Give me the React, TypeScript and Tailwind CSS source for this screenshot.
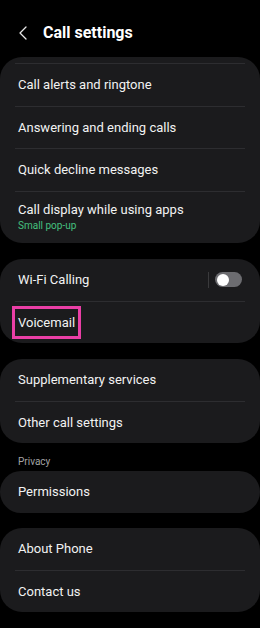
import { ChevronLeft } from 'lucide-react';

type Row = { label: string; sub?: string; toggle?: boolean; highlight?: boolean };

function Divider() {
  return <div className="mx-[15px] h-px bg-[#2d2d30]" />;
}

function Card({ rows, topDivider = false }: { rows: Row[]; topDivider?: boolean }) {
  return (
    <div className="rounded-[22px] bg-[#1b1b1d]">
      {topDivider && (
        <>
          <div className="h-[6px]" />
          <Divider />
        </>
      )}
      {rows.map((row, i) => (
        <div key={row.label}>
          {i > 0 && <Divider />}
          {row.sub ? (
            <div className="flex h-[51.5px] flex-col justify-center pl-[18px] pb-[2px]">
              <span className="text-[13px] leading-[18px] text-[#f2f2f2]">{row.label}</span>
              <span className="text-[10px] leading-[13px] text-[#45c07f]">{row.sub}</span>
            </div>
          ) : (
            <div className="flex h-[41.5px] items-center pl-[18px] pr-[18px]">
              {row.highlight ? (
                <span className="-ml-[6px] flex h-[33px] items-center border-[3px] border-[#ea3fa6] px-[3px] text-[13px] text-[#f2f2f2]">
                  {row.label}
                </span>
              ) : (
                <span className="text-[13px] text-[#f2f2f2]">{row.label}</span>
              )}
              {row.toggle && (
                <div className="ml-auto flex items-center gap-[6px]">
                  <div className="h-[16px] w-px bg-[#3a3a3c]" />
                  <div className="flex h-[15px] w-[27px] items-center rounded-full bg-[#6c6c70] pl-[1.5px]">
                    <div className="h-[12px] w-[12px] rounded-full bg-white" />
                  </div>
                </div>
              )}
            </div>
          )}
        </div>
      ))}
    </div>
  );
}

export default function App() {
  return (
    <div
      className="h-[628px] w-[260px] overflow-hidden bg-black text-white"
      style={{ fontFamily: 'Roboto, "Noto Sans", sans-serif' }}
    >
      <div className="flex h-[57px] items-center gap-[8px] pl-[11px] pt-[9px]">
        <ChevronLeft className="h-[24px] w-[24px] text-[#e8e8e8]" strokeWidth={1.3} />
        <span className="text-[16px] font-bold text-white">Call settings</span>
      </div>

      <div className="flex flex-col">
        <Card
          topDivider
          rows={[
            { label: 'Call alerts and ringtone' },
            { label: 'Answering and ending calls' },
            { label: 'Quick decline messages' },
            { label: 'Call display while using apps', sub: 'Small pop-up' },
          ]}
        />
        <div className="h-[16px]" />
        <Card rows={[{ label: 'Wi-Fi Calling', toggle: true }, { label: 'Voicemail', highlight: true }]} />
        <div className="h-[16px]" />
        <Card rows={[{ label: 'Supplementary services' }, { label: 'Other call settings' }]} />
        <div className="flex h-[28px] items-center pl-[18px] pt-[8px] text-[10px] text-[#a3a3a3]">Privacy</div>
        <Card rows={[{ label: 'Permissions' }]} />
        <div className="h-[15.5px]" />
        <Card rows={[{ label: 'About Phone' }, { label: 'Contact us' }]} />
      </div>
    </div>
  );
}
